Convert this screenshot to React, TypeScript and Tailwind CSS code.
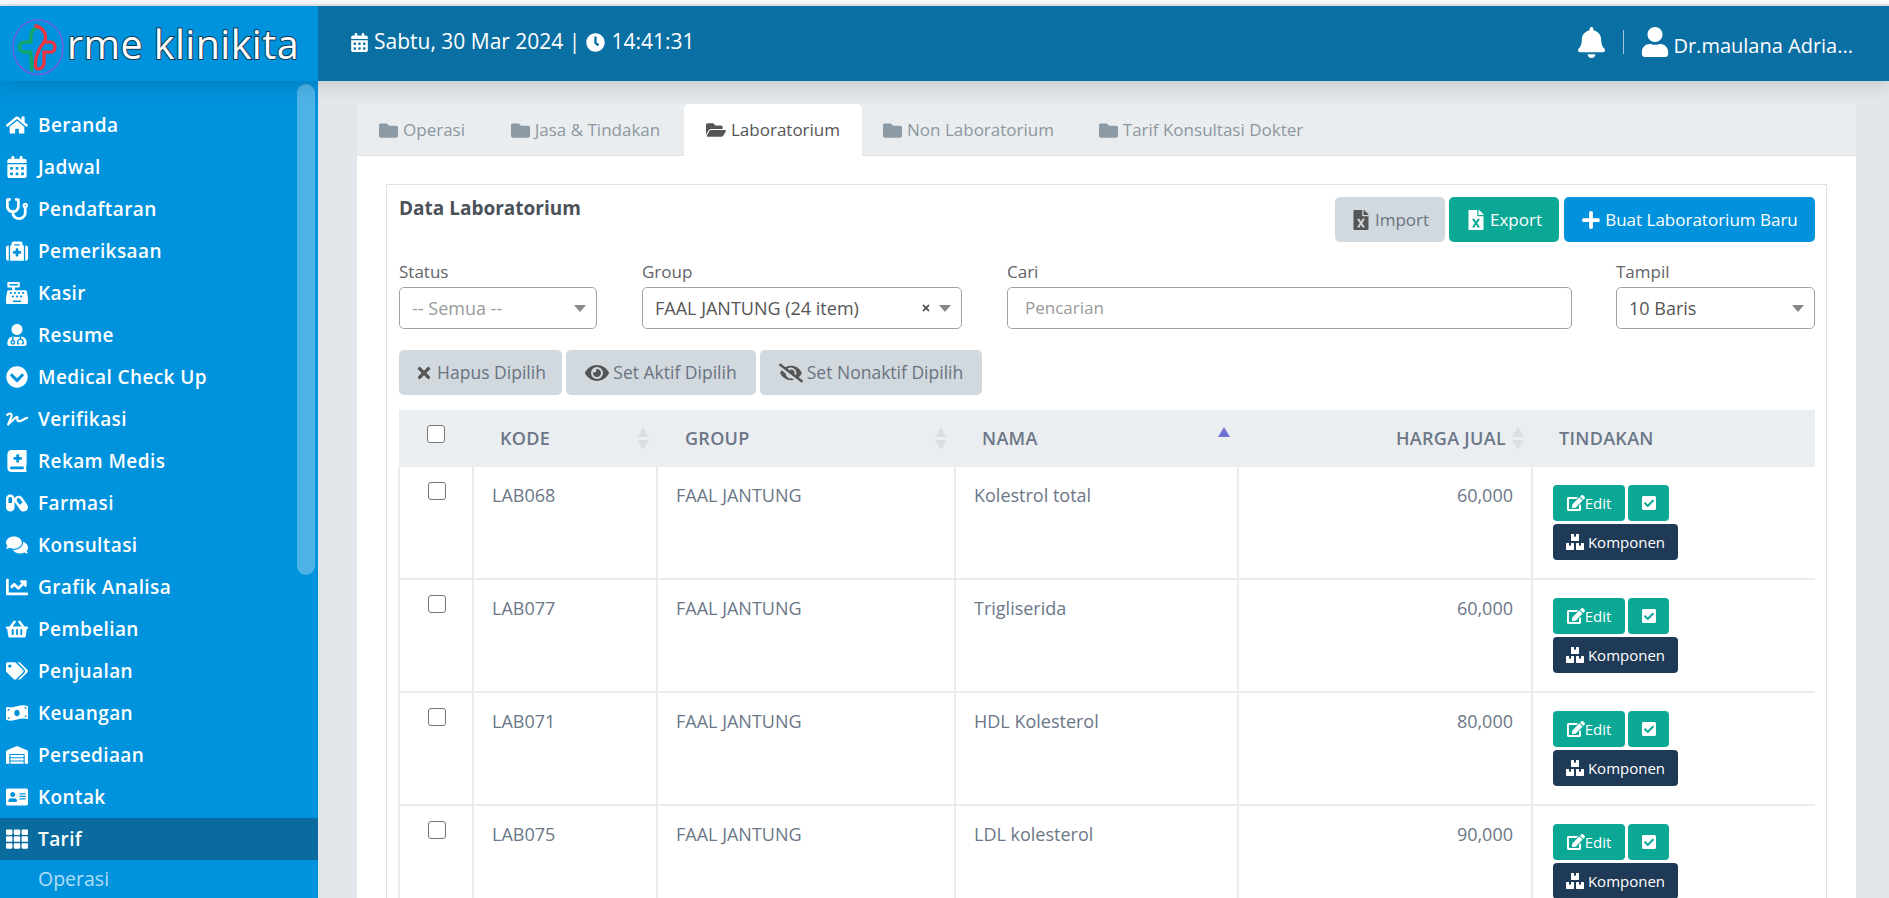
import React from "react";
import { FaHome, FaCalendarAlt, FaStethoscope, FaMedkit, FaCashRegister, FaUserMd, FaChevronCircleDown, FaSignature, FaBookMedical, FaCapsules, FaComments, FaChartLine, FaShoppingBasket, FaTags, FaMoneyBillWave, FaWarehouse, FaAddressCard, FaTh, FaClock, FaBell, FaUser, FaFolder, FaFolderOpen, FaFileExcel, FaPlus, FaTimes, FaEye, FaEyeSlash, FaEdit, FaCheckSquare, FaBoxes } from "react-icons/fa";

const menu: [string, React.ComponentType<{ className?: string }>][] = [
  ["Beranda", FaHome], ["Jadwal", FaCalendarAlt], ["Pendaftaran", FaStethoscope], ["Pemeriksaan", FaMedkit], ["Kasir", FaCashRegister],
  ["Resume", FaUserMd], ["Medical Check Up", FaChevronCircleDown], ["Verifikasi", FaSignature], ["Rekam Medis", FaBookMedical], ["Farmasi", FaCapsules],
  ["Konsultasi", FaComments], ["Grafik Analisa", FaChartLine], ["Pembelian", FaShoppingBasket], ["Penjualan", FaTags], ["Keuangan", FaMoneyBillWave],
  ["Persediaan", FaWarehouse], ["Kontak", FaAddressCard], ["Tarif", FaTh],
];
const rows = [
  ["LAB068", "Kolestrol total", "60,000"],
  ["LAB077", "Trigliserida", "60,000"],
  ["LAB071", "HDL Kolesterol", "80,000"],
  ["LAB075", "LDL kolesterol", "90,000"],
];

function Logo() {
  return (
    <svg width="56" height="62" viewBox="9 7.5 168 186" className="shrink-0">
      <ellipse cx="90" cy="110" rx="75" ry="82" fill="none" stroke="#7a5ce0" strokeWidth="4" />
      <path d="M92 52C70 52 68 70 68 95H50C30 95 30 125 50 125H68C72 145 68 165 72 182" fill="none" stroke="#12a866" strokeWidth="10" />
      <path d="M80 45C112 52 118 80 108 95H128C145 95 145 125 128 125H108C108 150 112 175 92 175C78 175 80 150 90 125C96 110 104 100 108 95" fill="none" stroke="#ef3340" strokeWidth="10" />
    </svg>
  );
}

function Sort({ active, right }: { active?: boolean; right?: boolean }) {
  return (
    <svg width="12" height="23" viewBox="0 0 12 23" className={right ? "shrink-0 ml-[6px]" : "shrink-0"}>
      <path d="M6 0l6 10H0z" fill={active ? "#6f70d8" : "#dcdfe2"} />
      {!active && <path d="M6 23L0 13h12z" fill="#dcdfe2" />}
    </svg>
  );
}

function Select({ text, muted, clear, width }: { text: string; muted?: boolean; clear?: boolean; width: string }) {
  return (
    <div className={`${width} h-[42px] border border-[#a3a3a3] rounded-[5px] flex items-center pl-[12px] pr-[10px] bg-white`}>
      <span className={`flex-1 text-[18px] ${muted ? "text-[#9a9a9a]" : "text-[#555]"}`}>{text}</span>
      {clear && <FaTimes className="text-[#555] text-[10px] mr-[8px]" />}
      <svg width="12" height="7" viewBox="0 0 12 7"><path d="M0 0h12L6 7z" fill="#888" /></svg>
    </div>
  );
}

function Label({ children }: { children: React.ReactNode }) {
  return <div className="text-[17px] leading-[20px] text-[#5f6368] mb-[5px]">{children}</div>;
}

function GrayBtn({ icon, text, width }: { icon: React.ReactNode; text: string; width: string }) {
  return (
    <button className={`${width} h-[45px] rounded-[5px] bg-[#d1d9df] text-[#6b7280] text-[17.5px] flex items-center justify-center gap-[4px]`}>
      {icon}{text}
    </button>
  );
}

function Tab({ text, active, width }: { text: string; active?: boolean; width: string }) {
  return (
    <div className={`${width} h-[52px] flex items-center justify-center gap-[5px] text-[17px] rounded-t-[5px] ${active ? "bg-white text-[#555]" : "text-[#8e979e]"}`}>
      {active ? <FaFolderOpen className="text-[#555] text-[20px]" /> : <FaFolder className="text-[#8c9aa5] text-[19px]" />}
      {text}
    </div>
  );
}

export default function App() {
  return (
    <div className="h-[898px] overflow-hidden bg-[#e3e7eb] font-['Open_Sans','Noto_Sans',sans-serif]">
      <div className="h-[6px] bg-white border-b-2 border-[#e8e8e8]" />
      <header className="relative z-10 h-[75px] flex shadow-[0_3px_18px_rgba(0,0,0,0.16)]">
        <div className="w-[318px] shrink-0 bg-[#0093dd] flex items-center pl-[11px] gap-[0px]">
          <Logo />
          <span className="font-['Open_Sans',sans-serif] font-medium text-[39.5px] leading-[44px] tracking-[0.4px] text-white [-webkit-text-stroke:2px_#123a52] [paint-order:stroke_fill]">rme klinikita</span>
        </div>
        <div className="flex-1 min-w-0 bg-[#0a6fa3] flex items-center text-white pl-[32px] pr-[36px] pb-[3px]">
          <FaCalendarAlt className="text-[19px] mr-[5px]" />
          <span className="text-[21px]">Sabtu, 30 Mar 2024 | </span>
          <FaClock className="text-[19px] mx-[6px]" />
          <span className="text-[21px]">14:41:31</span>
          <div className="ml-auto flex items-center">
            <FaBell className="text-[31px]" />
            <div className="w-px h-[24px] bg-white/60 mx-[16px]" />
            <FaUser className="text-[30px] mr-[3px]" />
            <span className="text-[20px] pt-[7px]">Dr.maulana Adria...</span>
          </div>
        </div>
      </header>
      <div className="flex h-[817px]">
        <aside className="relative w-[318px] shrink-0 bg-[#0093dd] pt-[23px] text-white overflow-hidden">
          <div className="absolute left-[297px] top-[3px] w-[18px] h-[491px] rounded-[9px] bg-white/30" />
          {menu.map(([name, Icon]) => (
            <div key={name} className={`h-[42px] flex items-center ${name === "Tarif" ? "bg-[#0a6c9e]" : ""}`}>
              <div className="w-[38px] pr-[4px] flex justify-center"><Icon className="text-[22px]" /></div>
              <span className="text-[19px] tracking-[0.4px] font-semibold">{name}</span>
            </div>
          ))}
          <div className="h-[38px] flex items-center pl-[38px] text-[19.5px] text-white/70">Operasi</div>
        </aside>
        <main className="flex-1 min-w-0 pl-[39px] pr-[33px] pt-[23px]">
          <div className="bg-white h-[900px]">
            <div className="h-[52px] bg-[#e9edf0] border-b border-[#dee2e6] flex">
              <Tab text="Operasi" width="w-[130px]" />
              <Tab text="Jasa & Tindakan" width="w-[197px]" />
              <Tab text="Laboratorium" active width="w-[178px]" />
              <Tab text="Non Laboratorium" width="w-[213px]" />
              <Tab text="Tarif Konsultasi Dokter" width="w-[252px]" />
            </div>
            <div className="ml-[29px] mr-[29px] mt-[28px] border border-[#dee2e6] pl-[12px] pr-[11px] pt-[12px] h-[800px]">
              <div className="flex items-start justify-between">
                <h2 className="text-[19px] font-bold text-[#4b5158] leading-[22px]">Data Laboratorium</h2>
                <div className="flex gap-[4px]">
                  <button className="w-[110px] h-[45px] rounded-[5px] bg-[#d1d9df] text-[#6b7280] text-[17px] flex items-center justify-center gap-[4px]"><FaFileExcel className="text-[#555] text-[20px]" />Import</button>
                  <button className="w-[110px] h-[45px] rounded-[5px] bg-[#0ca896] text-white text-[17px] flex items-center justify-center gap-[4px]"><FaFileExcel className="text-[20px]" />Export</button>
                  <button className="ml-[1px] w-[251px] h-[45px] rounded-[5px] bg-[#0092dc] text-white text-[17px] flex items-center justify-center gap-[4px]"><FaPlus className="text-[20px]" />Buat Laboratorium Baru</button>
                </div>
              </div>
              <div className="flex mt-[20px]">
                <div className="w-[198px] mr-[45px]"><Label>Status</Label><Select text="-- Semua --" muted width="w-[198px]" /></div>
                <div className="w-[320px] mr-[45px]"><Label>Group</Label><Select text="FAAL JANTUNG (24 item)" clear width="w-[320px]" /></div>
                <div className="w-[565px] mr-[44px]">
                  <Label>Cari</Label>
                  <div className="h-[42px] border border-[#a3a3a3] rounded-[5px] flex items-center pl-[17px] text-[17px] text-[#9a9a9a]">Pencarian</div>
                </div>
                <div className="w-[199px]"><Label>Tampil</Label><Select text="10 Baris" width="w-[199px]" /></div>
              </div>
              <div className="flex gap-[4px] mt-[21px]">
                <GrayBtn width="w-[163px]" text="Hapus Dipilih" icon={<FaTimes className="text-[#555] text-[18px]" />} />
                <GrayBtn width="w-[190px]" text="Set Aktif Dipilih" icon={<FaEye className="text-[#555] text-[24px]" />} />
                <GrayBtn width="w-[222px]" text="Set Nonaktif Dipilih" icon={<FaEyeSlash className="text-[#555] text-[24px]" />} />
              </div>
              <table className="mt-[15px] -ml-[1px] w-[1416px] table-fixed border-collapse text-[#6b7787]">
                <colgroup>
                  <col className="w-[74px]" /><col className="w-[184px]" /><col className="w-[298px]" /><col className="w-[283px]" /><col className="w-[294px]" /><col className="w-[283px]" />
                </colgroup>
                <thead>
                  <tr className="h-[57px] bg-[#ebeef1] text-[18px] tracking-[0.3px]">
                    <th className="align-top pt-[15px] pl-[28px] text-left"><span className="block w-[18px] h-[18px] rounded-[3px] border border-[#767676] bg-white" /></th>
                    <th className="pl-[27px] pr-[8px] font-semibold"><div className="flex items-center justify-between">KODE<Sort /></div></th>
                    <th className="pl-[28px] pr-[8px] font-semibold"><div className="flex items-center justify-between">GROUP<Sort /></div></th>
                    <th className="pl-[27px] pr-[8px] font-semibold"><div className="flex items-center justify-between">NAMA<Sort active /></div></th>
                    <th className="pr-[8px] font-semibold"><div className="flex items-center justify-end">HARGA JUAL<Sort right /></div></th>
                    <th className="pl-[27px] text-left font-semibold">TINDAKAN</th>
                  </tr>
                </thead>
                <tbody className="text-[18px]">
                  {rows.map(([code, name, price]) => (
                    <tr key={code} className="h-[113px] first:h-[112px] border-b-2 border-[#e9ecef]">
                      <td className="align-top pt-[15px] pl-[28px] border-l-2 border-r-2 border-[#e9ecef]"><span className="block w-[18px] h-[18px] rounded-[3px] border border-[#767676] bg-white" /></td>
                      <td className="align-top pt-[15px] pl-[18px] border-r-2 border-[#e9ecef]">{code}</td>
                      <td className="align-top pt-[15px] pl-[18px] border-r-2 border-[#e9ecef]">FAAL JANTUNG</td>
                      <td className="align-top pt-[15px] pl-[18px] border-r-2 border-[#e9ecef]">{name}</td>
                      <td className="align-top pt-[15px] pr-[18px] text-right border-r-2 border-[#e9ecef]">{price}</td>
                      <td className="align-top pt-[18px] pl-[20px]">
                        <div className="flex gap-[3px]">
                          <button className="w-[72px] h-[36px] rounded-[4px] bg-[#0ca896] text-white text-[15px] flex items-center justify-center"><FaEdit className="text-[18px]" />Edit</button>
                          <button className="w-[41px] h-[36px] rounded-[4px] bg-[#0ca896] text-white flex items-center justify-center"><FaCheckSquare className="text-[16px]" /></button>
                        </div>
                        <button className="mt-[3px] w-[125px] h-[36px] rounded-[4px] bg-[#1f3a56] text-white text-[15px] flex items-center justify-center gap-[4px]"><FaBoxes className="text-[18px]" />Komponen</button>
                      </td>
                    </tr>
                  ))}
                </tbody>
              </table>
            </div>
          </div>
        </main>
      </div>
    </div>
  );
}
